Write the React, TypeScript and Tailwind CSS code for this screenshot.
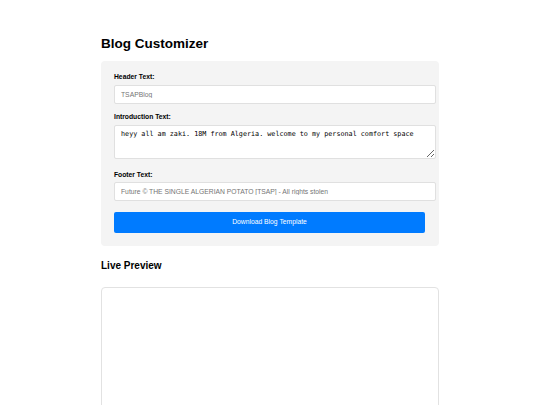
export default function App() {
  return (
    <div className="min-h-screen bg-white text-black font-['Liberation_Sans',Arial,sans-serif]">
      <div className="w-[338px] mx-auto pt-[36px]">
        <h1 className="text-[13.5px] leading-[16px] font-bold mb-[9px]">Blog Customizer</h1>

        <div className="bg-[#f4f4f4] rounded-[4px] px-[13px] pt-[12px] pb-[13px]">
          <label className="block text-[6.75px] leading-[8px] font-bold mb-[4px]">Header Text:</label>
          <input
            type="text"
            placeholder="TSAPBlog"
            className="block w-[322px] h-[19px] px-[6px] bg-white border border-[#e0e0e0] rounded-[2px] text-[6.75px] placeholder:text-[#757575] outline-none"
          />

          <label className="block text-[6.75px] leading-[8px] font-bold mt-[9px] mb-[4px]">Introduction Text:</label>
          <textarea
            defaultValue="heyy all am zaki. 18M from Algeria. welcome to my personal comfort space"
            className="block w-[322px] h-[34px] px-[6px] py-[4px] bg-white border border-[#e0e0e0] rounded-[2px] text-[6.75px] leading-[8px] font-['DejaVu_Sans_Mono',monospace] outline-none resize-y"
          />

          <label className="block text-[6.75px] leading-[8px] font-bold mt-[12px] mb-[3px]">Footer Text:</label>
          <input
            type="text"
            placeholder="Future © THE SINGLE ALGERIAN POTATO [TSAP] - All rights stolen"
            className="block w-[322px] h-[19px] px-[6px] bg-white border border-[#e0e0e0] rounded-[2px] text-[6.75px] placeholder:text-[#757575] outline-none"
          />

          <button className="block w-[311px] h-[21px] mt-[11px] bg-[#007bff] text-white text-[6.75px] rounded-[2px]">
            Download Blog Template
          </button>
        </div>

        <h2 className="text-[10px] leading-[12px] font-bold mt-[14px] mb-[15px]">Live Preview</h2>

        <div className="h-[200px] bg-white border border-[#e2e2e2] rounded-[4px]"></div>
      </div>
    </div>
  );
}
